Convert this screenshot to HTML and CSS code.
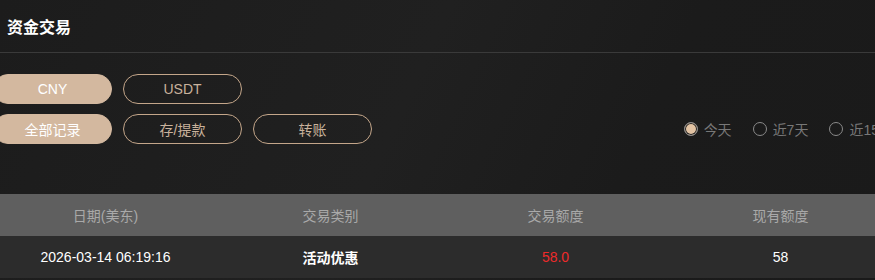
FILE: index.html
```html
<!DOCTYPE html>
<html lang="zh-CN">
<head>
    <meta charset="UTF-8">
    <meta name="viewport" content="width=device-width, initial-scale=1.0">
    <title>资金交易</title>
    <link rel="stylesheet" href="styles.css">
</head>
<body>
    <div class="page">
        <div class="title-bar">
            <h1 class="title">资金交易</h1>
        </div>

        <div class="panel">
            <div class="btn-row">
                <button class="pill active">CNY</button>
                <button class="pill">USDT</button>
            </div>
            <div class="btn-row">
                <button class="pill active">全部记录</button>
                <button class="pill">存/提款</button>
                <button class="pill">转账</button>

                <div class="range">
                    <label class="radio checked"><span class="dot"></span>今天</label>
                    <label class="radio"><span class="dot"></span>近7天</label>
                    <label class="radio"><span class="dot"></span>近15天</label>
                </div>
            </div>

            <table class="records">
                <thead>
                    <tr>
                        <th>日期(美东)</th>
                        <th>交易类别</th>
                        <th>交易额度</th>
                        <th>现有额度</th>
                    </tr>
                </thead>
                <tbody>
                    <tr>
                        <td>2026-03-14 06:19:16</td>
                        <td class="type">活动优惠</td>
                        <td class="amount">58.0</td>
                        <td>58</td>
                    </tr>
                </tbody>
            </table>
        </div>
    </div>
</body>
</html>
```

FILE: styles.css
```css
html, body {
    margin: 0;
    padding: 0;
}
body {
    font-family: "Liberation Sans", Arial, "Noto Sans CJK SC", sans-serif;
    background: linear-gradient(115deg, #1c1c1c 0%, #202020 45%, #1b1b1b 70%, #1a1a1a 100%);
    width: 875px;
    height: 280px;
    overflow: hidden;
}
.title-bar {
    height: 52px;
    border-bottom: 1px solid #3a3a3a;
    display: flex;
    align-items: center;
    padding-left: 7px;
}
.title {
    margin: 0;
    font-size: 16px;
    font-weight: bold;
    color: #ffffff;
}
.panel {
    width: 900px;
    margin-left: -7px;
    padding-top: 21px;
}
.btn-row {
    display: flex;
    align-items: center;
    gap: 11px;
    margin-bottom: 10px;
}
.pill {
    width: 119px;
    height: 30px;
    border-radius: 15px;
    border: 1px solid #c4a68a;
    background: transparent;
    color: #c9b29c;
    font-family: inherit;
    font-size: 14px;
    padding: 0;
    cursor: pointer;
}
.pill.active {
    background-color: #d3b89f;
    border-color: #d3b89f;
    color: #ffffff;
}
.range {
    margin-left: auto;
    display: flex;
    align-items: center;
    gap: 21px;
}
.radio {
    display: flex;
    align-items: center;
    gap: 6px;
    font-size: 14px;
    color: #787878;
}
.dot {
    width: 12px;
    height: 12px;
    border: 1px solid #8a8a8a;
    border-radius: 50%;
    box-sizing: content-box;
}
.radio.checked .dot {
    background-color: #e2c3a3;
    box-shadow: inset 0 0 0 1px #1c1c1c;
}
.records {
    width: 900px;
    margin-top: 50px;
    border-collapse: collapse;
    table-layout: fixed;
    font-size: 14px;
}
.records th {
    height: 42px;
    background-color: #5f5f5f;
    color: #a9a9a9;
    font-weight: normal;
    text-align: center;
    padding: 0;
}
.records td {
    height: 42px;
    background-color: #2c2c2c;
    color: #ffffff;
    text-align: center;
    padding: 0;
}
.records .type {
    font-weight: bold;
}
.records .amount {
    color: #ee2a2a;
}
```
